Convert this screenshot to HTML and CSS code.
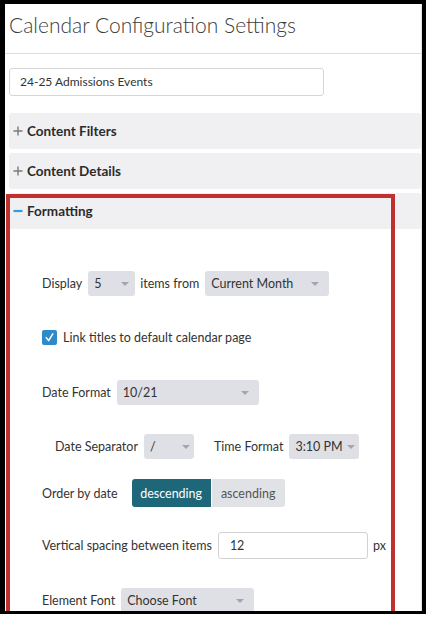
FILE: index.html
```html
<!DOCTYPE html>
<html>
<head>
<meta charset="utf-8">
<link rel="stylesheet" href="styles.css">
</head>
<body>
<div class="frame">
  <div class="page">
    <div class="title">Calendar Configuration Settings</div>
    <div class="name-input">24-25 Admissions Events</div>

    <div class="panel">
      <div class="panel-head">
        <svg class="toggle" width="10" height="10" viewBox="0 0 10 10"><path d="M5 0.5V9.5M0.5 5H9.5" stroke="#7a7a7a" stroke-width="1.4" fill="none"/></svg>
        <span>Content Filters</span>
      </div>
    </div>
    <div class="panel">
      <div class="panel-head">
        <svg class="toggle" width="10" height="10" viewBox="0 0 10 10"><path d="M5 0.5V9.5M0.5 5H9.5" stroke="#7a7a7a" stroke-width="1.4" fill="none"/></svg>
        <span>Content Details</span>
      </div>
    </div>
    <div class="panel open">
      <div class="panel-head">
        <svg class="toggle" width="10" height="10" viewBox="0 0 10 10"><path d="M0.5 5H9.5" stroke="#2a9fdc" stroke-width="2.2" fill="none"/></svg>
        <span>Formatting</span>
      </div>
      <div class="panel-body">
        <div class="row r1">
          <span class="lbl">Display</span>
          <div class="select s-num"><span>5</span><i class="caret"></i></div>
          <span class="lbl">items from</span>
          <div class="select s-month"><span>Current Month</span><i class="caret"></i></div>
        </div>
        <div class="row r2">
          <span class="check"><svg width="15" height="15" viewBox="0 0 15 15"><path d="M4.2 7.6L6.6 10.6L10.8 3.8" stroke="#fff" stroke-width="1.5" fill="none" stroke-linecap="round" stroke-linejoin="round"/></svg></span>
          <span class="lbl">Link titles to default calendar page</span>
        </div>
        <div class="row r3">
          <span class="lbl">Date Format</span>
          <div class="select s-date"><span>10/21</span><i class="caret"></i></div>
        </div>
        <div class="row r4">
          <span class="lbl">Date Separator</span>
          <div class="select s-sep"><span>/</span><i class="caret"></i></div>
          <span class="lbl time-lbl">Time Format</span>
          <div class="select s-time"><span>3:10 PM</span><i class="caret"></i></div>
        </div>
        <div class="row r5">
          <span class="lbl">Order by date</span>
          <div class="seg">
            <span class="seg-btn active">descending</span>
            <span class="seg-btn">ascending</span>
          </div>
        </div>
        <div class="row r6">
          <span class="lbl">Vertical spacing between items</span>
          <div class="num-input">12</div>
          <span class="lbl">px</span>
        </div>
        <div class="row r7">
          <span class="lbl">Element Font</span>
          <div class="select s-font"><span>Choose Font</span><i class="caret"></i></div>
        </div>
      </div>
    </div>

    <div class="highlight"></div>
  </div>
</div>
</body>
</html>
```
FILE: styles.css
```css
* { box-sizing: border-box; }
html, body { margin: 0; padding: 0; background: #fff; }
body { font-family: Lato, "Open Sans", Arial, sans-serif; color: #333; width: 426px; height: 626px; overflow: hidden; }

.frame {
  width: 426px;
  height: 614px;
  border-style: solid;
  border-color: #000;
  border-width: 4px 4px 3px 5px;
  overflow: hidden;
}
.page {
  position: relative;
  height: 100%;
  border-right: 1px solid #e4e4e4;
}

.title {
  font-size: 21px;
  font-weight: 300;
  color: #3c3c3c;
  line-height: 26px;
  padding: 8px 0 15px 4px;
  border-bottom: 1px solid #dedede;
}

.name-input {
  margin: 14px 0 0 4px;
  width: 315px;
  height: 28px;
  border: 1px solid #d6d6d6;
  border-radius: 3px;
  font-size: 12px;
  line-height: 26px;
  padding-left: 10px;
  color: #333;
}

.panel {
  margin: 17px 0 0 4px;
  border-radius: 3px;
}
.panel + .panel { margin-top: 4px; }
.panel-head {
  height: 36px;
  background: #f0f0f2;
  border-radius: 3px;
  display: flex;
  align-items: center;
  padding-left: 4px;
  font-size: 13.5px;
  font-weight: 700;
  color: #2b2b2b;
}
.toggle { margin-right: 4px; flex: none; }
.open .panel-head { border-radius: 3px 3px 0 0; }

.panel-body {
  padding-left: 33px;
  background: #fff;
}

.row {
  display: flex;
  align-items: center;
  height: 25px;
  font-size: 12.5px;
  color: #333;
}
.r1 { margin-top: 42px; }
.r2 { margin-top: 29px; }
.r3 { margin-top: 30px; }
.r4 { margin-top: 29px; padding-left: 13px; }
.r5 { margin-top: 20px; height: 28px; }
.r6 { margin-top: 25px; height: 27px; }
.r7 { margin-top: 29px; }

.lbl { white-space: nowrap; }

.select {
  position: relative;
  height: 25px;
  background: #dfe0e5;
  border-radius: 3px;
  display: flex;
  align-items: center;
  padding-left: 6px;
  margin: 0 6px;
  font-size: 12.5px;
  color: #333;
}
.caret {
  position: absolute;
  top: 11px;
  width: 0;
  height: 0;
  border-left: 4px solid transparent;
  border-right: 4px solid transparent;
  border-top: 4px solid #a5a6ad;
}
.s-num { width: 47px; margin-right: 5px; }
.s-num .caret { right: 6px; }
.s-month { width: 124px; }
.s-month .caret { right: 10px; }
.s-date { width: 142px; }
.s-date .caret { right: 10px; }
.s-sep { width: 50px; margin-left: 6px; }
.s-sep .caret { right: 4px; }
.time-lbl { margin-left: 14px; }
.s-time { width: 70px; }
.s-time .caret { right: 4px; }
.s-font { width: 133px; }
.s-font .caret { right: 10px; }

.check {
  width: 15px;
  height: 15px;
  background: #2e8bc9;
  border-radius: 2px;
  margin-right: 6px;
  display: flex;
}

.seg {
  display: flex;
  margin-left: 14px;
  height: 28px;
}
.seg-btn {
  display: flex;
  align-items: center;
  justify-content: center;
  background: #e1e2e6;
  color: #555;
  font-size: 12.5px;
  width: 73px;
  border-radius: 0 3px 3px 0;
}
.seg-btn.active {
  background: #1d6779;
  color: #fff;
  width: 79px;
  margin-right: 1px;
  border-radius: 3px 0 0 3px;
}

.num-input {
  width: 150px;
  height: 27px;
  margin: 0 5px 0 6px;
  border: 1px solid #d2d2d2;
  border-radius: 3px;
  padding-left: 11px;
  line-height: 25px;
  font-size: 12.5px;
  color: #333;
}

.highlight {
  position: absolute;
  left: 1px;
  top: 190px;
  width: 389px;
  height: 440px;
  border: 4px solid #c0302f;
  pointer-events: none;
}
```
